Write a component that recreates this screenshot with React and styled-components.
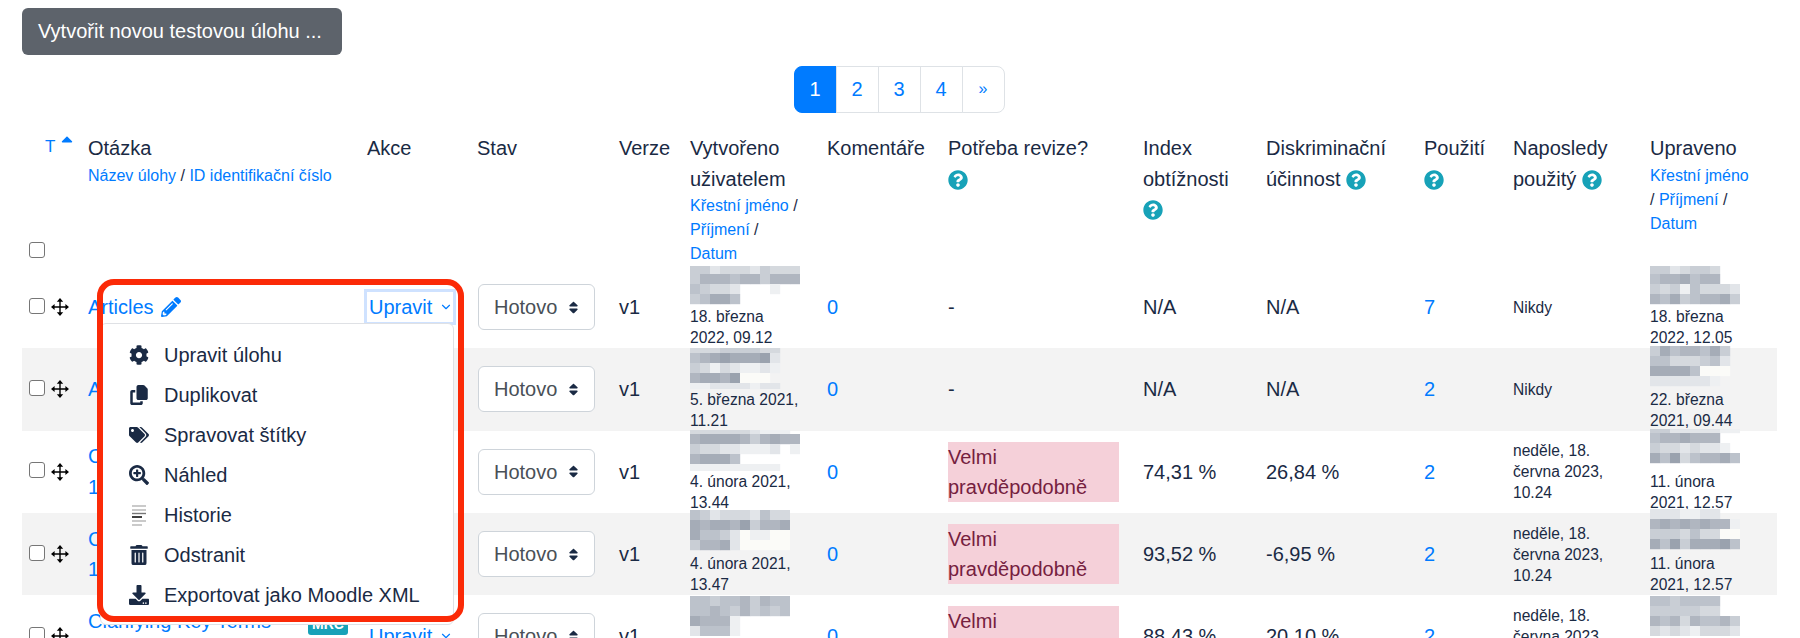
import React from 'react';
import styled, { createGlobalStyle } from 'styled-components';
import {
  FaCaretUp,
  FaCog,
  FaDownload,
  FaPencilAlt,
  FaQuestionCircle,
  FaSearchPlus,
  FaSort,
  FaTags,
  FaTrashAlt,
} from 'react-icons/fa';
import { FaCopy } from 'react-icons/fa6';
import { FiChevronDown } from 'react-icons/fi';

const SHADES = {
  0: 'transparent',
  w: '#fbfbf8',
  1: '#eef0f2',
  2: '#e2e5e9',
  3: '#d5d9de',
  4: '#c9ced5',
  5: '#bcc2cb',
  6: '#b0b6c0',
  7: '#a5acb7',
  8: '#9aa2ae',
};

const QUESTIONS = [
  {
    title: 'Articles',
    pencil: true,
    focused: true,
    created: {
      mosaic: { rows: ['44233324333', '46665664666', '54332000100', '45775000000', '00000000000'], cut: 0.2, trim: 0.8 },
      date: ['18. března', '2022, 09.12'],
    },
    comments: 0,
    review: '-',
    index: 'N/A',
    disc: 'N/A',
    usage: 7,
    last: ['Nikdy'],
    edited: {
      mosaic: { rows: ['442344300', '566756600', '434153332', '657456674', '000000000'], cut: 0.2, trim: 0.8 },
      date: ['18. března', '2022, 12.05'],
    },
  },
  {
    title: 'Articles',
    created: {
      mosaic: { rows: ['33344443300', '56787778200', '43132112100', '67768www000', '11222212200'], cut: 0.5, trim: 0.4 },
      date: ['5. března 2021,', '11.21'],
    },
    comments: 0,
    review: '-',
    index: 'N/A',
    disc: 'N/A',
    usage: 2,
    last: ['Nikdy'],
    edited: {
      mosaic: { rows: ['475665740', '553334520', '77775www0', '222222100', '000000000'], cut: 0, trim: 0.7 },
      date: ['22. března', '2021, 09.44'],
    },
  },
  {
    title: 'Clarifying Key Terms',
    second: '1',
    created: {
      mosaic: { rows: ['33333321110', '67777646766', '43322111201', '67775000000', '11111111100'], cut: 0.6, trim: 0.3 },
      date: ['4. února 2021,', '13.44'],
    },
    comments: 0,
    review: 'Velmi pravděpodobně',
    index: '74,31 %',
    disc: '26,84 %',
    usage: 2,
    last: ['neděle, 18.', 'června 2023,', '10.24'],
    edited: {
      mosaic: { rows: ['442222211', '566766600', '433232210', '758356675', '000000000'], cut: 0.6, trim: 0.25 },
      date: ['11. února', '2021, 12.57'],
    },
  },
  {
    title: 'Clarifying Key Terms',
    second: '1',
    created: {
      mosaic: { rows: ['5423332533', '7677684667', '75542w11ww', '46672wwwww', '0000000000'], cut: 0, trim: 0.7 },
      date: ['4. února 2021,', '13.47'],
    },
    comments: 0,
    review: 'Velmi pravděpodobně',
    index: '93,52 %',
    disc: '-6,95 %',
    usage: 2,
    last: ['neděle, 18.', 'června 2023,', '10.24'],
    edited: {
      mosaic: { rows: ['222112200', '676767661', '4443533ww', '758477785', '000000000'], cut: 0, trim: 0.6 },
      date: ['11. února', '2021, 12.57'],
    },
  },
  {
    title: 'Clarifying Key Terms',
    badge: 'MRC',
    second: '1',
    created: {
      mosaic: { rows: ['5545564655', '5565464545', '7666100000', '2555100000'], cut: 0, trim: 0 },
      date: ['4. února 2021,', '13.49'],
    },
    comments: 0,
    review: 'Velmi pravděpodobně',
    index: '88,43 %',
    disc: '20,10 %',
    usage: 2,
    last: ['neděle, 18.', 'června 2023,', '10.24'],
    edited: {
      mosaic: { rows: ['554555500', '444443300', '656365564', '323213332'], cut: 0, trim: 0 },
      date: ['11. února', '2021, 12.57'],
    },
  },
];

const MENU_ITEMS = [
  { label: 'Upravit úlohu', icon: <FaCog size={20} /> },
  { label: 'Duplikovat', icon: <FaCopy size={20} /> },
  { label: 'Spravovat štítky', icon: <FaTags size={20} /> },
  { label: 'Náhled', icon: <FaSearchPlus size={20} /> },
  { label: 'Historie', icon: <HistoryIcon /> },
  { label: 'Odstranit', icon: <FaTrashAlt size={20} /> },
  { label: 'Exportovat jako Moodle XML', icon: <FaDownload size={20} /> },
];

function HistoryIcon() {
  return (
    <svg width="16" height="21" viewBox="0 0 16 21">
      <path d="M1 1h14M1 5h14" stroke="#b9b9b9" strokeWidth="1.4" />
      <path d="M1 8.5h14" stroke="#777" strokeWidth="1.4" />
      <path d="M1 12h10" stroke="#111" strokeWidth="1.6" />
      <path d="M1 16h14M1 20h10" stroke="#b9b9b9" strokeWidth="1.4" />
    </svg>
  );
}

function MoveIcon() {
  return (
    <svg width="18" height="18" viewBox="0 0 18 18">
      <path d="M9 3v12M3 9h12" stroke="#000" strokeWidth="1.4" />
      <path d="M9 0l3.2 3.8H5.8zM9 18l-3.2-3.8h6.4zM0 9l3.6-3v6zM18 9l-3.6 3V6z" fill="#000" />
    </svg>
  );
}

const Mosaic = ({ rows, cut, trim }) => {
  const cols = rows[0].length;
  const span = rows.length - cut - trim;
  return (
    <MosaicSvg width={cols * 10} height={span * 10} viewBox={`0 ${cut} ${cols} ${span}`} preserveAspectRatio="none">
      {rows.map((row, y) =>
        row.split('').map((shade, x) => (
          <rect key={`${x}-${y}`} x={x} y={y} width="1.02" height="1.02" fill={SHADES[shade]} />
        ))
      )}
    </MosaicSvg>
  );
};

const Stamp = ({ mosaic, date }) => (
  <StampBox>
    <Mosaic {...mosaic} />
    <SmallLines>
      {date.map((line) => (
        <div key={line}>{line}</div>
      ))}
    </SmallLines>
  </StampBox>
);

const Help = () => (
  <HelpMark>
    <FaQuestionCircle size={20} />
  </HelpMark>
);

const QuestionRow = ({ q, striped }) => (
  <Row $striped={striped}>
    <ToolsCell>
      <Tools>
        <Check type="checkbox" />
        <MoveIcon />
      </Tools>
    </ToolsCell>
    <Cell>
      <TextLink>{q.title}</TextLink>
      {q.pencil && (
        <PencilMark>
          <FaPencilAlt size={20} />
        </PencilMark>
      )}
      {q.badge && <Badge>{q.badge}</Badge>}
      {q.second && <div><TextLink>{q.second}</TextLink></div>}
    </Cell>
    <Cell>
      <EditToggle $focused={q.focused}>
        Upravit
        <FiChevronDown size={14} />
      </EditToggle>
    </Cell>
    <Cell>
      <SelectBox>
        Hotovo
        <FaSort size={15} color="#1a2a44" />
      </SelectBox>
    </Cell>
    <Cell>v1</Cell>
    <Cell>
      <Stamp {...q.created} />
    </Cell>
    <Cell>
      <TextLink>{q.comments}</TextLink>
    </Cell>
    <Cell>{q.review === '-' ? '-' : <ReviewFlag>{q.review}</ReviewFlag>}</Cell>
    <Cell>{q.index}</Cell>
    <Cell>{q.disc}</Cell>
    <Cell>
      <TextLink>{q.usage}</TextLink>
    </Cell>
    <Cell>
      <SmallLines>
        {q.last.map((line) => (
          <div key={line}>{line}</div>
        ))}
      </SmallLines>
    </Cell>
    <Cell>
      <Stamp {...q.edited} />
    </Cell>
  </Row>
);

export default function App() {
  return (
    <Page>
      <GlobalStyle />
      <CreateButton>Vytvořit novou testovou úlohu ...</CreateButton>
      <Pagination>
        {['1', '2', '3', '4'].map((p) => (
          <PageItem key={p} $active={p === '1'}>
            {p}
          </PageItem>
        ))}
        <PageItem $small>»</PageItem>
      </Pagination>
      <Table>
        <colgroup>
          {[54, 279, 110, 142, 71, 137, 121, 195, 123, 158, 89, 137, 139].map((w, i) => (
            <col key={i} width={w} />
          ))}
        </colgroup>
        <thead>
          <tr>
            <HeadToolsCell>
              <HeadTools>
                <SortLine>
                  <SortLink>T</SortLink>
                  <SortArrow>
                    <FaCaretUp size={18} />
                  </SortArrow>
                </SortLine>
                <Check type="checkbox" />
              </HeadTools>
            </HeadToolsCell>
            <Head>
              Otázka
              <SortLinks>
                <TextLink>Název úlohy</TextLink> / <TextLink>ID identifikační číslo</TextLink>
              </SortLinks>
            </Head>
            <Head>Akce</Head>
            <Head>Stav</Head>
            <Head>Verze</Head>
            <Head>
              Vytvořeno
              <br />
              uživatelem
              <SortLinks>
                <TextLink>Křestní jméno</TextLink> /<br />
                <TextLink>Příjmení</TextLink> /<br />
                <TextLink>Datum</TextLink>
              </SortLinks>
            </Head>
            <Head>Komentáře</Head>
            <Head>
              Potřeba revize?
              <br />
              <Help />
            </Head>
            <Head>
              Index
              <br />
              obtížnosti
              <br />
              <Help />
            </Head>
            <Head>
              Diskriminační
              <br />
              účinnost <Help />
            </Head>
            <Head>
              Použití
              <br />
              <Help />
            </Head>
            <Head>
              Naposledy
              <br />
              použitý <Help />
            </Head>
            <Head>
              Upraveno
              <SortLinks>
                <TextLink>Křestní jméno</TextLink>
                <br />/ <TextLink>Příjmení</TextLink> /<br />
                <TextLink>Datum</TextLink>
              </SortLinks>
            </Head>
          </tr>
        </thead>
        <tbody>
          {QUESTIONS.map((q, i) => (
            <QuestionRow key={i} q={q} striped={i % 2 === 1} />
          ))}
        </tbody>
      </Table>
      <ActionMenu>
        {MENU_ITEMS.map((item) => (
          <MenuItem key={item.label}>
            <MenuIcon>{item.icon}</MenuIcon>
            {item.label}
          </MenuItem>
        ))}
      </ActionMenu>
      <Callout />
    </Page>
  );
}

const GlobalStyle = createGlobalStyle`
  html, body {
    margin: 0;
    height: 100%;
    overflow: hidden;
    background: #fff;
  }
  body {
    font-family: "Liberation Sans", Arial, sans-serif;
    font-size: 20px;
    line-height: 30.5px;
    color: #1a2a44;
  }
`;

const Page = styled.div`
  position: relative;
  padding: 8px 23px 0 22px;
`;

const CreateButton = styled.button`
  display: block;
  width: 320px;
  height: 47px;
  padding: 0 16px;
  border: 0;
  border-radius: 6px;
  background: #5d636b;
  color: #fff;
  font: inherit;
  text-align: left;
`;

const Pagination = styled.div`
  display: flex;
  justify-content: center;
  margin-top: 11px;
`;

const PageItem = styled.span`
  display: flex;
  align-items: center;
  justify-content: center;
  box-sizing: border-box;
  width: 43px;
  height: 47px;
  margin-left: -1px;
  border: 1.5px solid ${({ $active }) => ($active ? '#007bff' : '#dee2e6')};
  background: ${({ $active }) => ($active ? '#007bff' : '#fff')};
  color: ${({ $active }) => ($active ? '#fff' : '#007bff')};
  font-size: ${({ $small }) => ($small ? '16px' : 'inherit')};

  &:first-child {
    border-radius: 8px 0 0 8px;
  }
  &:last-child {
    border-radius: 0 8px 8px 0;
  }
`;

const Table = styled.table`
  width: 1755px;
  table-layout: fixed;
  border-collapse: collapse;
`;

const Head = styled.th`
  height: 153px;
  box-sizing: border-box;
  padding: 20px 12px 0;
  vertical-align: top;
  text-align: left;
  font-weight: 400;
`;

const HeadToolsCell = styled(Head)`
  padding: 20px 0 0 7px;
`;

const HeadTools = styled.div`
  display: flex;
  flex-direction: column;
  justify-content: space-between;
  height: 128px;
`;

const SortLine = styled.div`
  display: flex;
  align-items: flex-start;
  padding-left: 16px;
  line-height: 28px;
`;

const SortLink = styled.span`
  color: #007bff;
  font-size: 17px;
`;

const SortArrow = styled.span`
  display: block;
  height: 18px;
  margin: -3px 0 0 3px;
  color: #007bff;
  line-height: 0;
`;

const SortLinks = styled.div`
  font-size: 16px;
  line-height: 24px;
`;

const TextLink = styled.span`
  color: #007bff;
`;

const HelpMark = styled.span`
  display: inline-block;
  height: 20px;
  color: #17a2b8;
  line-height: 0;
  vertical-align: -4px;
`;

const Row = styled.tr`
  background: ${({ $striped }) => ($striped ? '#f3f3f3' : 'transparent')};
`;

const Cell = styled.td`
  height: 82.33px;
  padding: 0 12px;
  vertical-align: middle;
  white-space: nowrap;
`;

const ToolsCell = styled(Cell)`
  padding: 0 0 0 7px;
`;

const Tools = styled.div`
  display: flex;
  align-items: center;
  gap: 6px;
`;

const Check = styled.input`
  appearance: none;
  display: block;
  box-sizing: border-box;
  width: 16px;
  height: 16px;
  margin: 0 0 3px;
  border: 1.5px solid #767676;
  border-radius: 3px;
  background: #fff;
`;

const PencilMark = styled.span`
  display: inline-block;
  margin-left: 7px;
  color: #007bff;
  line-height: 0;
  vertical-align: -3px;
`;

const Badge = styled.span`
  display: inline-block;
  margin-left: 37px;
  padding: 0 4px;
  border-radius: 3px;
  background: #17a2b8;
  color: #fff;
  font-size: 14px;
  font-weight: 700;
  line-height: 22px;
  vertical-align: -1px;
`;

const EditToggle = styled.div`
  display: flex;
  align-items: center;
  justify-content: space-between;
  box-sizing: border-box;
  width: 86px;
  height: 30px;
  padding: 0 0 0 2px;
  color: #007bff;
  box-shadow: ${({ $focused }) => ($focused ? '0 0 0 3px #cfe2ff' : 'none')};
`;

const SelectBox = styled.div`
  display: flex;
  align-items: center;
  justify-content: space-between;
  box-sizing: border-box;
  width: 117px;
  height: 46px;
  margin-left: 1px;
  padding: 0 13px 0 15px;
  border: 1.5px solid #ced4da;
  border-radius: 6px;
  background: #fff;
  color: #495057;
`;

const StampBox = styled.div`
  display: flex;
  flex-direction: column;
  justify-content: flex-end;
  height: 82.33px;
`;

const MosaicSvg = styled.svg`
  display: block;
  flex: none;
  filter: blur(0.5px);
`;

const SmallLines = styled.div`
  font-size: 15.6px;
  line-height: 21px;
`;

const ReviewFlag = styled.div`
  width: 171px;
  height: 60px;
  background: #f5d0d9;
  color: #75203f;
  line-height: 30px;
  white-space: normal;
`;

const ActionMenu = styled.div`
  position: absolute;
  top: 323px;
  left: 100px;
  box-sizing: border-box;
  width: 354px;
  height: 302px;
  padding: 11px 0 10px;
  border: 1.5px solid #dfe1e5;
  border-radius: 6px;
  background: #fff;
`;

const MenuItem = styled.div`
  display: flex;
  align-items: center;
  gap: 11px;
  height: 40px;
  padding-left: 24px;
  color: #1a2a44;
`;

const MenuIcon = styled.span`
  display: flex;
  align-items: center;
  justify-content: center;
  width: 28px;
  height: 24px;
`;

const Callout = styled.div`
  position: absolute;
  top: 279px;
  left: 97px;
  box-sizing: border-box;
  width: 367px;
  height: 343px;
  border: 6.5px solid #fb2a07;
  border-radius: 17px;
  pointer-events: none;
`;
